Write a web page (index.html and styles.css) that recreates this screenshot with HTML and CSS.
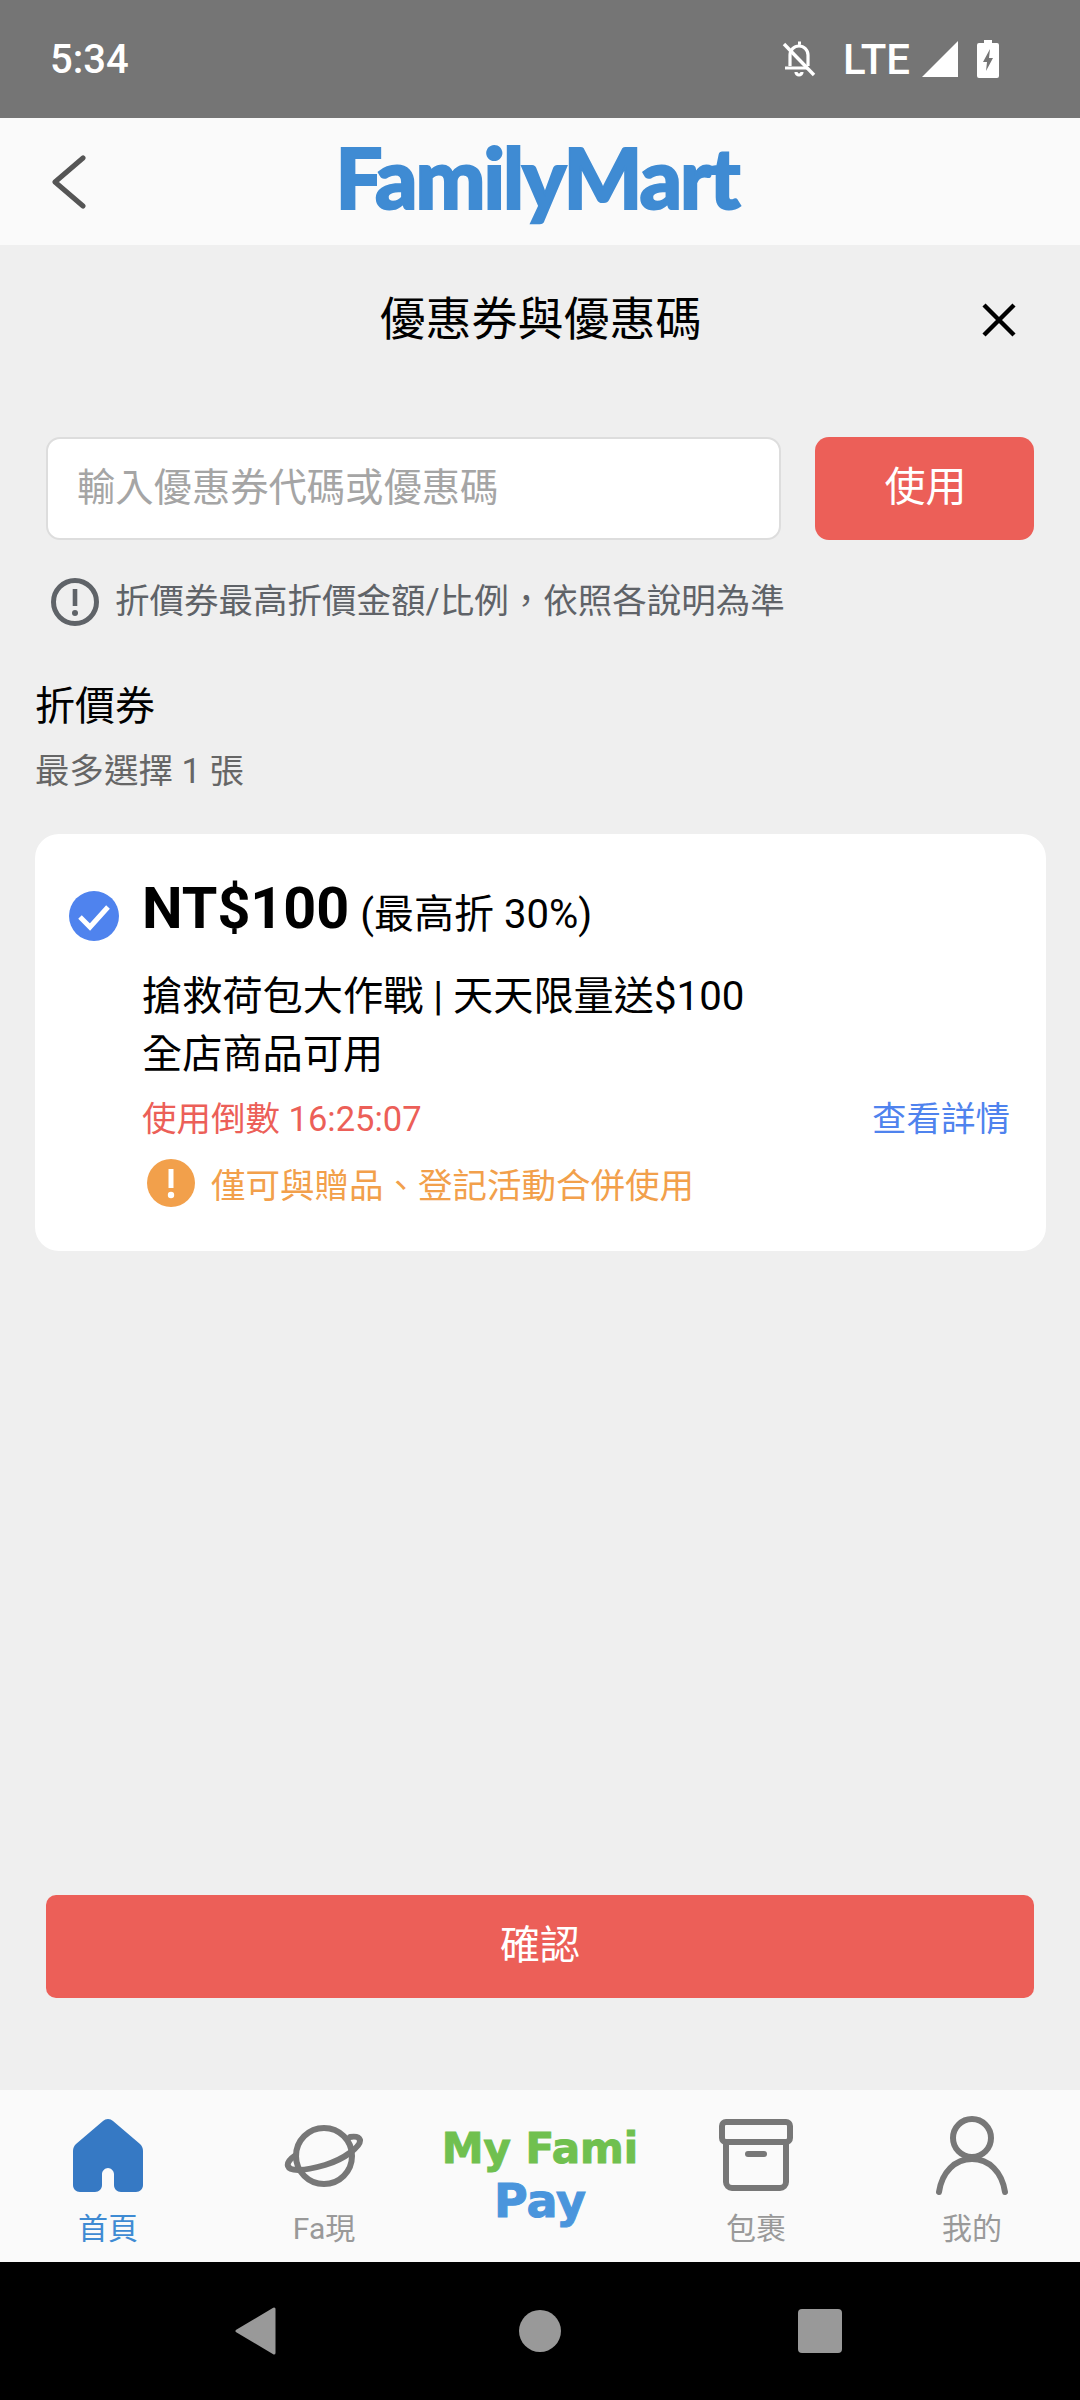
FILE: index.html
```html
<!DOCTYPE html>
<html lang="zh-Hant">
<head>
    <meta charset="UTF-8">
    <meta name="viewport" content="width=device-width, initial-scale=1">
    <title>優惠券與優惠碼</title>
    <link rel="stylesheet" href="styles.css">
</head>
<body>
<!-- Status bar -->
<div class="statusbar">
    <span class="clock">5:34</span>
    <div class="status-icons">
        <svg class="ic-bell" viewBox="0 0 36 38"><path d="M9 26V15c0-5 4-9 9-9s9 4 9 9v11M4 28h22M15 32a3 3 0 0 0 6 0M17 3h3" fill="none" stroke="#fff" stroke-width="3.2"/><path d="M3 4l30 31" stroke="#fff" stroke-width="3.4"/></svg>
        <span class="lte">LTE</span>
        <svg class="ic-signal" viewBox="0 0 36 36"><path d="M36 0v36H0z" fill="#fff"/></svg>
        <svg class="ic-battery" viewBox="0 0 22 38"><path d="M7 0h8v3h5a2 2 0 0 1 2 2v31a2 2 0 0 1-2 2H2a2 2 0 0 1-2-2V5a2 2 0 0 1 2-2h5z" fill="#fff"/><path d="M13 9l-7 13h4l-1 9 7-13h-4z" fill="#757575"/></svg>
    </div>
</div>

<!-- Header -->
<div class="topbar">
    <svg class="ic-back" viewBox="0 0 38 54"><path d="M33 3L5 27l28 24" fill="none" stroke="#555" stroke-width="5" stroke-linecap="round" stroke-linejoin="round"/></svg>
    <span class="logo">FamilyMart</span>
</div>

<!-- Content -->
<div class="content">
    <div class="sheet-title">
        <h1>優惠券與優惠碼</h1>
        <svg class="ic-close" viewBox="0 0 36 36"><path d="M3 3l30 30M33 3L3 33" stroke="#000" stroke-width="4.4"/></svg>
    </div>

    <div class="code-row">
        <div class="code-input"><span>輸入優惠券代碼或優惠碼</span></div>
        <div class="code-btn"><span>使用</span></div>
    </div>

    <div class="hint">
        <svg class="ic-info" viewBox="0 0 48 48"><circle cx="24" cy="24" r="21.5" fill="none" stroke="#5f6368" stroke-width="5"/><path d="M24 11v17" stroke="#5f6368" stroke-width="4.6"/><circle cx="24" cy="35" r="3" fill="#5f6368"/></svg>
        <span>折價券最高折價金額/比例&#xFF0C;依照各說明為準</span>
    </div>

    <h2 class="section-title">折價券</h2>
    <p class="section-sub">最多選擇 1 張</p>

    <div class="coupon">
        <svg class="ic-check" viewBox="0 0 50 50"><circle cx="25" cy="25" r="25" fill="#4f83ee"/><path d="M11 26l10 10 18-20" fill="none" stroke="#fff" stroke-width="5"/></svg>
        <div class="coupon-body">
            <div class="coupon-amount"><strong>NT$100</strong><span>(最高折 30%)</span></div>
            <div class="coupon-name">搶救荷包大作戰 | 天天限量送$100</div>
            <div class="coupon-name second">全店商品可用</div>
            <div class="coupon-meta">
                <span class="countdown">使用倒數 16:25:07</span>
                <span class="detail">查看詳情</span>
            </div>
            <div class="coupon-warn">
                <svg class="ic-warn" viewBox="0 0 48 48"><circle cx="24" cy="24" r="24" fill="#f2a04b"/><path d="M24 10v19" stroke="#fff" stroke-width="5"/><circle cx="24" cy="36" r="3.2" fill="#fff"/></svg>
                <span>僅可與贈品、登記活動合併使用</span>
            </div>
        </div>
    </div>

    <div class="confirm-wrap">
        <div class="confirm-btn"><span>確認</span></div>
    </div>
</div>

<!-- Bottom tabs -->
<div class="tabbar">
    <div class="tab active">
        <svg class="tab-icon" viewBox="0 0 80 80"><path d="M40 3c2 0 3.500.8 5 2l27 23c2 2 3 4 3 7v34c0 4-3 7-7 7H53c-4 0-7-3-7-7V58c0-3-3-6-6-6s-6 3-6 6v11c0 4-3 7-7 7H12c-4 0-7-3-7-7V35c0-3 1-5 3-7L35 5c1.500-1.200 3-2 5-2z" fill="#3679c4"/></svg>
        <span>首頁</span>
    </div>
    <div class="tab">
        <svg class="tab-icon" viewBox="0 0 80 80"><circle cx="40" cy="40" r="28" fill="none" stroke="#777" stroke-width="6"/><path d="M66 21c6-1 9 0 10 3 1 6-15 19-35 25C20 55 6 56 4 50c-1-3 2-7 8-11" fill="none" stroke="#777" stroke-width="6" stroke-linecap="round"/></svg>
        <span>Fa現</span>
    </div>
    <div class="tab pay">
        <span class="pay-top">My Fami</span>
        <span class="pay-bottom">Pay</span>
    </div>
    <div class="tab">
        <svg class="tab-icon" viewBox="0 0 80 80"><path d="M10 6h60a4 4 0 0 1 4 4v12a4 4 0 0 1-4 4H10a4 4 0 0 1-4-4V10a4 4 0 0 1 4-4zM10 26v40a6 6 0 0 0 6 6h48a6 6 0 0 0 6-6V26" fill="none" stroke="#777" stroke-width="6"/><path d="M32 38h16" stroke="#777" stroke-width="6" stroke-linecap="round"/></svg>
        <span>包裹</span>
    </div>
    <div class="tab">
        <svg class="tab-icon" viewBox="0 0 80 80"><circle cx="40" cy="22" r="19" fill="none" stroke="#777" stroke-width="6"/><path d="M7 76c3-20 16-33 33-33s30 13 33 33" fill="none" stroke="#777" stroke-width="6" stroke-linecap="round"/></svg>
        <span>我的</span>
    </div>
</div>

<!-- Android nav -->
<div class="navbar">
    <svg class="nav-back" viewBox="0 0 42 48"><path d="M39 2v44L2 24z" fill="#999" stroke="#999" stroke-width="3" stroke-linejoin="round"/></svg>
    <div class="nav-home"></div>
    <div class="nav-recent"></div>
</div>
</body>
</html>
```

FILE: styles.css
```css
/* Base */
* { box-sizing: border-box; margin: 0; padding: 0; }
body {
    width: 1080px;
    height: 2400px;
    display: flex;
    flex-direction: column;
    overflow: hidden;
    background: #efefef;
    font-family: Roboto, "Noto Sans CJK TC", sans-serif;
}

/* Status bar */
.statusbar {
    height: 118px;
    background: #757575;
    color: #fff;
    display: flex;
    align-items: center;
    justify-content: space-between;
    padding: 0 80px 0 50px;
}
.clock { font-size: 40px; font-weight: 500; }
.status-icons { display: flex; align-items: center; }
.ic-bell { width: 36px; height: 38px; margin-right: 26px; }
.lte { font-size: 42px; font-weight: 500; margin-right: 12px; }
.ic-signal { width: 36px; height: 36px; margin-right: 18px; }
.ic-battery { width: 24px; height: 38px; }

/* Header */
.topbar {
    height: 127px;
    background: #fafafa;
    display: flex;
    align-items: center;
    justify-content: center;
    position: relative;
}
.ic-back { position: absolute; left: 50px; top: 37px; width: 38px; height: 54px; }
.logo {
    font-family: Lato, sans-serif;
    font-weight: 900;
    font-size: 83px;
    letter-spacing: -2px;
    line-height: 1;
    color: #3f8bd3;
    padding: 0 6px 8px 0;
    -webkit-text-stroke: 2px #3f8bd3;
}

/* Content */
.content {
    flex: 1;
    display: flex;
    flex-direction: column;
    padding: 0 34px 0 35px;
}
.sheet-title {
    height: 140px;
    display: flex;
    align-items: center;
    justify-content: center;
    position: relative;
    margin-bottom: 52px;
}
.sheet-title h1 { font-size: 46px; font-weight: 400; color: #000; }
.ic-close { position: absolute; top: 57px; width: 36px; height: 36px; right: 29px; }

.code-row { display: flex; gap: 34px; padding: 0 12px 0 11px; }
.code-input {
    flex: 1;
    height: 103px;
    background: #fff;
    border: 2px solid #ddd;
    border-radius: 14px;
    padding: 0 0 8px 29px;
    display: flex;
    align-items: center;
    font-size: 38.300px;
    color: #a5a5a5;
}
.code-btn {
    width: 219px;
    height: 103px;
    background: #ec5f58;
    border-radius: 14px;
    color: #fff;
    font-size: 41px;
    padding: 0 0 11px 2px;
    display: flex;
    align-items: center;
    justify-content: center;
}
.hint {
    display: flex;
    align-items: flex-start;
    gap: 16px;
    margin: 38px 0 0 16px;
    font-size: 34.500px;
    color: #5f6368;
}
.hint span { line-height: 46px; }
.ic-info { width: 48px; height: 48px; }

.section-title { font-size: 40px; font-weight: 400; color: #000; margin-top: 52px; line-height: 58px; }
.section-sub { font-size: 34.500px; color: #666; margin-top: 10px; line-height: 50px; }

/* Coupon card */
.coupon {
    margin-top: 38px;
    height: 417px;
    background: #fff;
    border-radius: 24px;
    display: flex;
    padding: 0 36px 0 34px;
}
.ic-check { width: 50px; height: 50px; margin-top: 57px; flex-shrink: 0; }
.coupon-body { flex: 1; margin-left: 23px; padding-top: 40px; }
.coupon-amount { color: #000; line-height: 70px; }
.coupon-amount strong { font-size: 57.500px; font-weight: 700; }
.coupon-amount span { font-size: 40px; margin-left: 11px; }
.coupon-name { font-size: 40.200px; color: #000; line-height: 59px; margin-top: 9px; }
.coupon-name.second { margin-top: 0; line-height: 58px; }
.coupon-meta {
    display: flex;
    justify-content: space-between;
    align-items: center;
    margin-top: 5px;
    font-size: 34.500px;
    line-height: 60px;
}
.countdown { color: #ec5f58; }
.detail { color: #4f83ee; }
.coupon-warn {
    display: flex;
    align-items: center;
    gap: 16px;
    margin-top: 9px;
    margin-left: 5px;
    font-size: 34.500px;
    color: #f2a04b;
}
.ic-warn { width: 48px; height: 48px; }

.confirm-wrap { margin-top: auto; padding: 0 12px 92px 11px; }
.confirm-btn {
    height: 103px;
    background: #ec5f58;
    border-radius: 10px;
    color: #fff;
    font-size: 40px;
    padding-bottom: 10px;
    display: flex;
    align-items: center;
    justify-content: center;
}

/* Bottom tabs */
.tabbar {
    height: 172px;
    background: #fafafa;
    display: grid;
    grid-template-columns: repeat(5, 1fr);
}
.tab {
    display: flex;
    flex-direction: column;
    align-items: center;
    padding-top: 26px;
    font-size: 30px;
    line-height: 44px;
    color: #999;
}
.tab.active { color: #3f8bd3; }
.tab-icon { width: 80px; height: 80px; margin-bottom: 11px; }
.tab.pay {
    padding-top: 33px;
    font-family: "DejaVu Sans", sans-serif;
    font-weight: 700;
    font-size: 42px;
    line-height: 52px;
    white-space: nowrap;
}
.pay-top { color: #70c04f; -webkit-text-stroke: 1px #70c04f; }
.pay-bottom { color: #4a95dc; font-size: 46px; -webkit-text-stroke: 1px #4a95dc; }

/* Android nav */
.navbar {
    height: 138px;
    background: #000;
    display: flex;
    align-items: center;
    justify-content: center;
    padding-right: 4px;
}
.nav-back { width: 42px; height: 48px; margin-right: 242px; }
.nav-home { width: 42px; height: 42px; border-radius: 50%; background: #999; margin-right: 237px; }
.nav-recent { width: 44px; height: 44px; border-radius: 4px; background: #999; }
```
